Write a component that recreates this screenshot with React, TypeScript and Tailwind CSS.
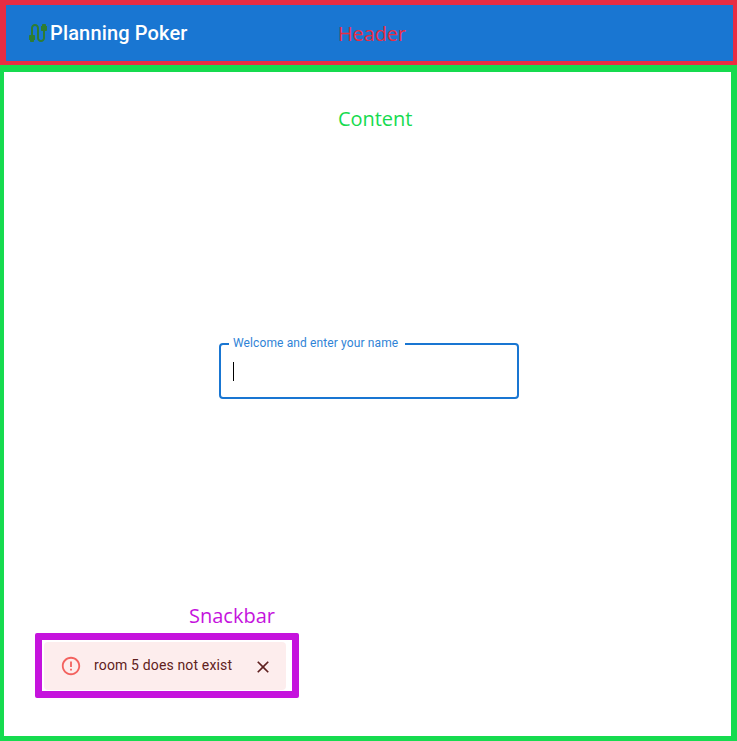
import React from 'react';

function CableIcon() {
  return (
    <svg viewBox="0 0 24 24" className="size-6 shrink-0 fill-[#2e7d32]">
      <path d="M20 5V4c0-.55-.45-1-1-1h-2c-.55 0-1 .45-1 1v1h-1v4c0 .55.45 1 1 1h1v7c0 1.1-.9 2-2 2s-2-.9-2-2V7c0-2.21-1.79-4-4-4S5 4.79 5 7v7H4c-.55 0-1 .45-1 1v4h1v1c0 .55.45 1 1 1h2c.55 0 1-.45 1-1v-1h1v-4c0-.55-.45-1-1-1H7V7c0-1.1.9-2 2-2s2 .9 2 2v10c0 2.21 1.79 4 4 4s4-1.79 4-4v-7h1c.55 0 1-.45 1-1V5h-1z" />
    </svg>
  );
}

function Header() {
  return (
    <header className="flex h-[65px] items-start border-t-5 border-r-4 border-b-4 border-l-6 border-[#e82d43] bg-[#1976d2] pt-4 pl-5">
      <CableIcon />
      <h1 className="w-[288px] text-[20px] leading-6 font-medium tracking-[0.15px] text-white">Planning Poker</h1>
      <span className="pt-px font-['Open_Sans',sans-serif] text-[20px] leading-6 tracking-[-0.15px] text-[#e82d43]">Header</span>
    </header>
  );
}

function NameField() {
  return (
    <fieldset className="mt-[205px] ml-[215px] h-[63px] w-[300px] rounded border-2 border-[#1976d2] pl-2">
      <legend className="h-4 w-[176px] pl-1 text-[12px] leading-[15px] tracking-[0.12px] whitespace-nowrap text-[#2f83d6]">
        Welcome and enter your name
      </legend>
      <div className="mt-[10px] ml-1 h-[19px] w-px bg-black" />
    </fieldset>
  );
}

function Snackbar() {
  return (
    <div className="ml-[31px] h-[65px] w-[264px] rounded-[2px] border-7 border-[#c513dd] pt-[2px] pl-[2px]">
      <div role="alert" className="flex h-12 w-[242px] items-center rounded bg-[#fdeded] pr-[13px] pl-4 text-[#5f2120]">
        <svg viewBox="0 0 24 24" className="size-[22px] shrink-0 fill-[#f3625f]">
          <path d="M11 15h2v2h-2zm0-8h2v6h-2zm.99-5C6.47 2 2 6.48 2 12s4.47 10 9.99 10C17.52 22 22 17.52 22 12S17.52 2 11.99 2zM12 20c-4.42 0-8-3.58-8-8s3.58-8 8-8 8 3.58 8 8-3.58 8-8 8z" />
        </svg>
        <span className="mb-[2px] ml-3 text-[14px] leading-5 tracking-[0.15px] whitespace-nowrap">room 5 does not exist</span>
        <button aria-label="Close" className="mt-[2px] ml-auto">
          <svg viewBox="0 0 24 24" className="block size-5 fill-current">
            <path d="M19 6.41 17.59 5 12 10.59 6.41 5 5 6.41 10.59 12 5 17.59 6.41 19 12 13.41 17.59 19 19 17.59 13.41 12z" />
          </svg>
        </button>
      </div>
    </div>
  );
}

export default function App() {
  return (
    <div className="flex h-[741px] w-[737px] flex-col overflow-hidden bg-white font-[Roboto,sans-serif]">
      <Header />
      <main className="flex min-h-0 flex-1 flex-col border-t-7 border-r-6 border-b-5 border-l-4 border-[#16db4f]">
        <div className="mt-[35px] ml-[334px] font-['Open_Sans',sans-serif] text-[20px] leading-6 tracking-[-0.05px] text-[#16db4f]">Content</div>
        <NameField />
        <div className="mt-auto pb-[38px]">
          <div className="mb-[5px] ml-[185px] font-['Open_Sans',sans-serif] text-[20px] leading-6 text-[#c513dd]">Snackbar</div>
          <Snackbar />
        </div>
      </main>
    </div>
  );
}
